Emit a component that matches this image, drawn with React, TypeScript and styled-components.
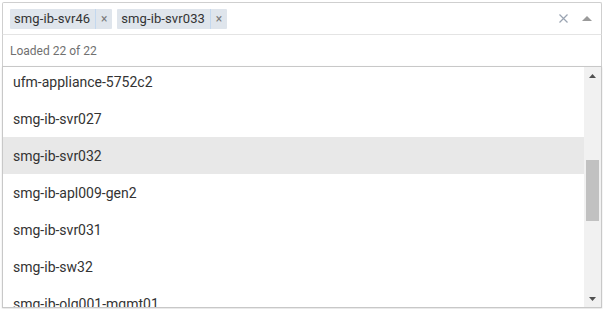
import React from "react";
import styled, { createGlobalStyle } from "styled-components";

const Global = createGlobalStyle`
  html, body { margin: 0; padding: 0; background: #fff; }
  body { font-family: Roboto, "Noto Sans", "Liberation Sans", sans-serif; color: #333; }
  * { box-sizing: border-box; }
`;

const Page = styled.div`
  padding: 2px 0 0 2px;
  width: 603px;
  height: 309px;
  overflow: hidden;
`;

const Dropdown = styled.div`
  width: 600px;
  display: flex;
  flex-direction: column;
`;

const Control = styled.div`
  height: 33px;
  border: 1px solid #cfcfcf;
  border-bottom: 1px solid #e4e4e4;
  border-radius: 2px 2px 0 0;
  display: flex;
  align-items: center;
  padding: 0 0 0 7px;
`;

const Chips = styled.div`
  flex: 1;
  display: flex;
  gap: 5px;
  align-items: center;
`;

const Chip = styled.div`
  height: 20px;
  display: flex;
  align-items: stretch;
  background: #dfe5ec;
  border-radius: 1px;
  font-size: 13px;
  color: #333;
`;

const ChipLabel = styled.span`
  display: flex;
  align-items: center;
  padding: 0 5px 0 4px;
  border-right: 1px solid #c3d8ef;
  letter-spacing: 0.1px;
`;

const ChipRemove = styled.span`
  width: 16px;
  display: flex;
  align-items: center;
  justify-content: center;
  color: #7a7a7a;
  font-size: 12px;
`;

const Indicators = styled.div`
  display: flex;
  align-items: center;
  gap: 14px;
  padding-right: 9px;
`;

const IconBox = styled.span<{ $w: number; $h: number }>`
  width: ${(p) => p.$w}px;
  height: ${(p) => p.$h}px;
  display: flex;
`;

const Status = styled.div`
  height: 31px;
  border-left: 1px solid #cfcfcf;
  border-right: 1px solid #cfcfcf;
  display: flex;
  align-items: center;
  padding-left: 7px;
  font-size: 12px;
  color: #707070;
`;

const ListBox = styled.div`
  height: 242px;
  border: 1px solid #c8c8c8;
  display: flex;
  box-shadow: 0 1px 2px rgba(0, 0, 0, 0.12);
  background: #fff;
`;

const Options = styled.div`
  flex: 1;
  overflow: hidden;
`;

const Option = styled.div<{ $active?: boolean }>`
  height: 37px;
  display: flex;
  align-items: center;
  padding-left: 10px;
  font-size: 14px;
  color: #333;
  background: ${(p) => (p.$active ? "#e8e8e8" : "#fff")};
`;

const Scrollbar = styled.div`
  width: 17px;
  background: #f1f1f1;
  display: flex;
  flex-direction: column;
`;

const ScrollButton = styled.div`
  height: 17px;
  display: flex;
  align-items: center;
  justify-content: center;
`;

const Track = styled.div`
  flex: 1;
  display: flex;
  flex-direction: column;
  padding: 0 2px;
`;

const Thumb = styled.div`
  background: #c1c1c1;
  flex: none;
`;

const items = [
  "smg-ib-svr001",
  "smg-ib-svr002",
  "smg-ib-svr010",
  "smg-ib-svr011",
  "smg-ib-svr020",
  "smg-ib-svr021",
  "smg-ib-svr033",
  "smg-ib-svr46",
  "ufm-appliance-5752c2",
  "smg-ib-svr027",
  "smg-ib-svr032",
  "smg-ib-apl009-gen2",
  "smg-ib-svr031",
  "smg-ib-sw32",
  "smg-ib-olg001-mgmt01",
  "smg-ib-olg002-mgmt01",
  "smg-ib-sw33",
  "smg-ib-svr040",
  "smg-ib-svr041",
  "smg-ib-apl010-gen2",
  "smg-ib-svr050",
  "ufm-appliance-5752c3",
];

const ITEM_H = 37;
const VIEW_H = 240;
const SCROLL = 300;

const Triangle = ({ up, color, w, h }: { up: boolean; color: string; w: number; h: number }) => (
  <svg width={w} height={h} viewBox={`0 0 ${w} ${h}`}>
    <polygon
      points={up ? `0,${h} ${w / 2},0 ${w},${h}` : `0,0 ${w},0 ${w / 2},${h}`}
      fill={color}
    />
  </svg>
);

export default function App() {
  // virtualised window of the scrolled list
  const first = Math.floor(SCROLL / ITEM_H);
  const offset = SCROLL - first * ITEM_H;
  const last = Math.min(items.length, Math.ceil((SCROLL + VIEW_H) / ITEM_H));
  const visible = items.slice(first, last);

  const contentH = items.length * ITEM_H;
  const trackH = VIEW_H - 34;
  const thumbH = (trackH * VIEW_H) / contentH;
  const thumbTop = (SCROLL / (contentH - VIEW_H)) * (trackH - thumbH);

  return (
    <Page>
      <Global />
      <Dropdown>
        <Control>
          <Chips>
            {["smg-ib-svr46", "smg-ib-svr033"].map((c) => (
              <Chip key={c}>
                <ChipLabel>{c}</ChipLabel>
                <ChipRemove>×</ChipRemove>
              </Chip>
            ))}
          </Chips>
          <Indicators>
            <IconBox $w={9} $h={9}>
              <svg width="9" height="9" viewBox="0 0 9 9">
                <path d="M0.5 0.5 L8.5 8.5 M8.5 0.5 L0.5 8.5" stroke="#9aa4b2" strokeWidth="1.2" />
              </svg>
            </IconBox>
            <IconBox $w={10} $h={5}>
              <Triangle up color="#9a9a9a" w={10} h={5} />
            </IconBox>
          </Indicators>
        </Control>
        <Status>Loaded 22 of 22</Status>
        <ListBox>
          <Options>
            <div style={{ marginTop: -offset }}>
              {visible.map((it) => (
                <Option key={it} $active={it === "smg-ib-svr032"}>
                  {it}
                </Option>
              ))}
            </div>
          </Options>
          <Scrollbar>
            <ScrollButton>
              <Triangle up color="#505050" w={7} h={4} />
            </ScrollButton>
            <Track>
              <div style={{ height: thumbTop }} />
              <Thumb style={{ height: thumbH }} />
            </Track>
            <ScrollButton>
              <Triangle up={false} color="#505050" w={7} h={4} />
            </ScrollButton>
          </Scrollbar>
        </ListBox>
      </Dropdown>
    </Page>
  );
}
